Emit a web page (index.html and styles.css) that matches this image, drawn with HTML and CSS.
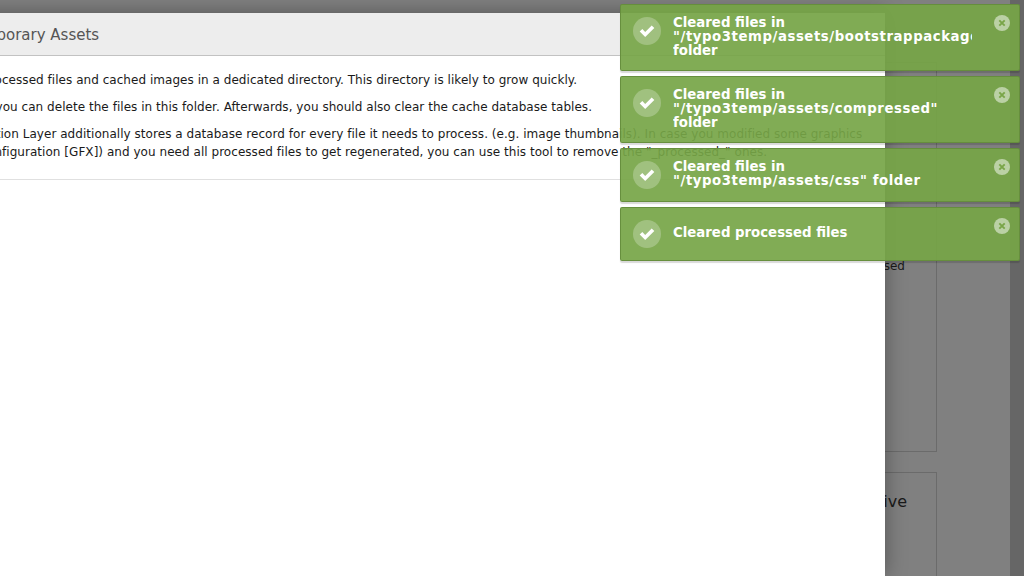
FILE: index.html
```html
<!DOCTYPE html>
<html lang="en">
<head>
<meta charset="utf-8">
<title>Clear Temporary Assets</title>
<link rel="stylesheet" href="styles.css">
</head>
<body>
<div class="page">
  <main class="content">
    <section class="card card-tall"><p class="card-text">Processed</p></section>
    <section class="card card-low"><h3 class="card-title">Archive</h3></section>
  </main>
  <div class="scrollbar"></div>
</div>

<div class="modal">
  <header class="modal-head">Clear Temporary Assets</header>
  <div class="modal-body">
    <p class="para-lead">TYPO3 keeps all processed files and cached images in a dedicated directory. This directory is likely to grow quickly.</p>
    <p>To free disk space, you can delete the files in this folder. Afterwards, you should also clear the cache database tables.</p>
    <p class="para-last">TYPO3's File Abstraction Layer additionally stores a database record for every file it needs to process. (e.g. image thumbnails). In case you modified some graphics<br>core settings (All Configuration [GFX]) and you need all processed files to get regenerated, you can use this tool to remove the "_processed_" ones.</p>
  </div>
</div>

<div class="toasts">
  <div class="toast">
    <span class="toast-icon"><svg viewBox="0 0 16 16" width="16" height="16"><path d="M.7 8.6 L3.3 6 L6.2 8.9 L12.7 2.4 L15.3 5 L6.2 14.1 Z" fill="#fff"/></svg></span>
    <div class="toast-text">Cleared files in<br><span class="toast-path">"/typo3temp/assets/bootstrappackage"</span><br>folder</div>
    <span class="toast-close"><svg viewBox="0 0 16 16" width="16" height="16"><path d="M5.3 5.3 L10.7 10.7 M10.7 5.3 L5.3 10.7" stroke="#79a548" stroke-width="1.9" fill="none"/></svg></span>
  </div>
  <div class="toast">
    <span class="toast-icon"><svg viewBox="0 0 16 16" width="16" height="16"><path d="M.7 8.6 L3.3 6 L6.2 8.9 L12.7 2.4 L15.3 5 L6.2 14.1 Z" fill="#fff"/></svg></span>
    <div class="toast-text">Cleared files in<br><span class="toast-path">"/typo3temp/assets/compressed"</span><br>folder</div>
    <span class="toast-close"><svg viewBox="0 0 16 16" width="16" height="16"><path d="M5.3 5.3 L10.7 10.7 M10.7 5.3 L5.3 10.7" stroke="#79a548" stroke-width="1.9" fill="none"/></svg></span>
  </div>
  <div class="toast">
    <span class="toast-icon"><svg viewBox="0 0 16 16" width="16" height="16"><path d="M.7 8.6 L3.3 6 L6.2 8.9 L12.7 2.4 L15.3 5 L6.2 14.1 Z" fill="#fff"/></svg></span>
    <div class="toast-text">Cleared files in<br><span class="toast-path">"/typo3temp/assets/css" folder</span></div>
    <span class="toast-close"><svg viewBox="0 0 16 16" width="16" height="16"><path d="M5.3 5.3 L10.7 10.7 M10.7 5.3 L5.3 10.7" stroke="#79a548" stroke-width="1.9" fill="none"/></svg></span>
  </div>
  <div class="toast">
    <span class="toast-icon"><svg viewBox="0 0 16 16" width="16" height="16"><path d="M.7 8.6 L3.3 6 L6.2 8.9 L12.7 2.4 L15.3 5 L6.2 14.1 Z" fill="#fff"/></svg></span>
    <div class="toast-text toast-text-single">Cleared processed files</div>
    <span class="toast-close"><svg viewBox="0 0 16 16" width="16" height="16"><path d="M5.3 5.3 L10.7 10.7 M10.7 5.3 L5.3 10.7" stroke="#79a548" stroke-width="1.9" fill="none"/></svg></span>
  </div>
</div>
</body>
</html>
```
FILE: styles.css
```css
html, body {
  margin: 0;
  height: 100%;
  overflow: hidden;
}
body {
  background: #808080;
  font-family: "DejaVu Sans", Verdana, sans-serif;
  color: #1a1a1a;
}
.page {
  display: flex;
  height: 576px;
}
.content {
  flex: 1;
  padding: 62px 73px 0 0;
  display: flex;
  flex-direction: column;
  align-items: flex-end;
  gap: 20px;
  overflow: hidden;
}
.card {
  width: 300px;
  flex: none;
  border: 1px solid #6b6b6b;
  box-sizing: border-box;
  text-align: right;
}
.card-tall {
  height: 390px;
  padding: 196px 31px 0 0;
}
.card-low {
  height: 200px;
  padding: 19px 29px 0 0;
}
.card-text {
  margin: 0;
  font-size: 12px;
  line-height: 14px;
}
.card-title {
  margin: 0;
  font-size: 16px;
  font-weight: 400;
  line-height: 20px;
}
.scrollbar {
  width: 14px;
  flex: none;
  background: #666;
}
.modal {
  position: absolute;
  left: -150px;
  top: 13px;
  width: 1035px;
  height: 563px;
  background: #fff;
  box-shadow: 0 0 20px rgba(0, 0, 0, .35);
  overflow: hidden;
}
.modal-head {
  height: 43px;
  box-sizing: border-box;
  background: #ededed;
  border-bottom: 1px solid #c2c2c2;
  padding-left: 72px;
  font-size: 15px;
  line-height: 44px;
  color: #555;
}
.modal-body {
  padding: 15px 0 18px 30px;
  border-bottom: 1px solid #e0e0e0;
  font-size: 12px;
  line-height: 18px;
  letter-spacing: .04px;
  white-space: nowrap;
}
.modal-body p {
  margin: 0 0 9px;
}
.modal-body .para-lead {
  margin-left: 2px;
}
.modal-body .para-last {
  margin: 0 0 0 -7px;
}
.toasts {
  position: absolute;
  left: 620px;
  top: 4px;
  width: 400px;
  display: flex;
  flex-direction: column;
  gap: 5px;
}
.toast {
  display: flex;
  align-items: flex-start;
  box-sizing: border-box;
  min-height: 54px;
  padding: 0 9px 0 12px;
  background: rgba(118, 165, 70, .92);
  border: 1px solid rgba(100, 140, 60, .9);
  box-shadow: 0 2px 1px rgba(0, 0, 0, .15);
  border-radius: 2px;
}
.toast-icon {
  flex: none;
  width: 28px;
  height: 28px;
  margin-top: 12px;
  border-radius: 50%;
  background: rgba(255, 255, 255, .25);
  display: flex;
  align-items: center;
  justify-content: center;
}
.toast-text {
  flex: none;
  width: 299px;
  margin: 11px 0 12px 12px;
  overflow: hidden;
  white-space: nowrap;
  font-size: 13.3px;
  font-weight: 700;
  line-height: 14px;
  color: #fff;
}
.toast-path {
  letter-spacing: .55px;
}
.toast-text-single {
  margin-top: 18px;
}
.toast-close {
  flex: none;
  width: 16px;
  height: 16px;
  margin: 10px 0 0 22px;
  border-radius: 50%;
  background: rgba(255, 255, 255, .5);
}
.toast-close svg, .toast-icon svg {
  display: block;
}
```
